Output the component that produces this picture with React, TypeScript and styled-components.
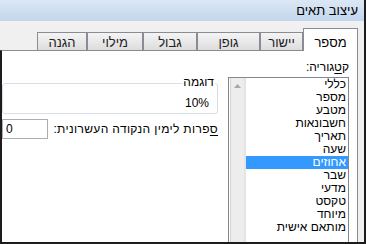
import React from "react";
import styled, { createGlobalStyle } from "styled-components";

const FONT = `"Liberation Sans", "DejaVu Sans", sans-serif`;

const Global = createGlobalStyle`
  html, body { margin: 0; padding: 0; background: #fff; }
  body { width: 366px; height: 244px; overflow: hidden; }
  *, *::before, *::after { box-sizing: border-box; }
`;

const Frame = styled.div`
  width: 366px;
  height: 244px;
  display: flex;
  flex-direction: column;
  direction: rtl;
  overflow: hidden;
  background: #f0f0f0;
  border-right: 2px solid #1c1c1c;
  border-bottom: 2px solid #1c1c1c;
  font-family: ${FONT};
  color: #000;
`;

const TitleBar = styled.div`
  flex: none;
  height: 21px;
  display: flex;
  align-items: center;
  padding-right: 6px;
  background: linear-gradient(#dbe7f4, #c3d6ed);
  font-size: 13px;
`;

const Body = styled.div`
  flex: 1;
  min-height: 0;
  display: flex;
  flex-direction: column;
  padding: 7px 6px 0 0;
`;

const TabStrip = styled.div`
  flex: none;
  height: 22px;
  display: flex;
  align-items: flex-end;
`;

const Tab = styled.div<{ $w: number; $active?: boolean }>`
  flex: none;
  width: ${(p) => p.$w}px;
  height: ${(p) => (p.$active ? 23 : 18)}px;
  margin-bottom: ${(p) => (p.$active ? -1 : 0)}px;
  position: relative;
  z-index: ${(p) => (p.$active ? 1 : 0)};
  border: 1px solid #898c95;
  border-bottom: none;
  background: ${(p) =>
    p.$active ? "#fff" : "linear-gradient(#f4f4f4, #e9e9e9 50%, #dcdcdc)"};
  display: flex;
  justify-content: center;
  padding-top: ${(p) => (p.$active ? 7 : 3)}px;
  font-size: 13px;
  line-height: 14px;
  color: ${(p) => (p.$active ? "#000" : "#222")};
`;

const Panel = styled.div`
  flex: 1;
  min-height: 0;
  display: flex;
  gap: 10px;
  padding: 9px 8px 0 0;
  overflow: hidden;
  background: #fff;
  border-top: 1px solid #898c95;
  border-right: 1px solid #898c95;
  border-left: 2px solid #1c1c1c;
`;

const RightCol = styled.div`
  flex: none;
  width: 121px;
  display: flex;
  flex-direction: column;
`;

const FieldLabel = styled.div<{ $spacing?: number }>`
  font-size: 12px;
  line-height: 14px;
  white-space: nowrap;
  letter-spacing: ${(p) => p.$spacing ?? 0}px;
  u { text-decoration: underline; text-underline-offset: 2px; }
`;

const ListBox = styled.div`
  flex: 1;
  margin-top: 3px;
  display: flex;
  border: 1px solid #828790;
  border-bottom: none;
`;

const Items = styled.div`
  flex: 1;
  display: flex;
  flex-direction: column;
`;

const Item = styled.div<{ $selected?: boolean }>`
  height: 13px;
  line-height: 13px;
  padding-right: 2px;
  font-size: 12px;
  white-space: nowrap;
  background: ${(p) => (p.$selected ? "#3399ff" : "transparent")};
  color: ${(p) => (p.$selected ? "#fff" : "#000")};
`;

const ScrollBar = styled.div`
  flex: none;
  width: 17px;
  display: flex;
  flex-direction: column;
  align-items: center;
  padding-top: 6px;
  background: linear-gradient(to right, #fdfdfd 0 1px, #d6d6d6 1px 2px, #ededed 2px 15px, #e4e4e4 15px);
`;

const LeftCol = styled.div`
  flex: 1;
  min-width: 0;
  display: flex;
  flex-direction: column;
  padding-top: 23px;
`;

const GroupBox = styled.div`
  position: relative;
  height: 31px;
  border: 1px solid #d5dfe5;
  border-radius: 3px;
  padding: 12px 8px 0 0;
  font-size: 12px;
  line-height: 14px;
`;

const Legend = styled.span`
  position: absolute;
  top: -9px;
  right: 2px;
  padding: 0 1px;
  background: #fff;
  font-size: 12px;
  line-height: 14px;
`;

const DecimalRow = styled.div`
  margin-top: 5px;
  display: flex;
  align-items: center;
  gap: 5px;
`;

const SpinField = styled.div`
  flex: 1;
  height: 20px;
  border: 1px solid #abadb3;
  direction: ltr;
  text-align: left;
  padding-left: 3px;
  font-size: 12px;
  line-height: 18px;
`;

const tabs: { label: string; w: number }[] = [
  { label: "מספר", w: 55 },
  { label: "יישור", w: 43 },
  { label: "גופן", w: 63 },
  { label: "גבול", w: 54 },
  { label: "מילוי", w: 56 },
  { label: "הגנה", w: 50 },
];

const categories = [
  "כללי",
  "מספר",
  "מטבע",
  "חשבונאות",
  "תאריך",
  "שעה",
  "אחוזים",
  "שבר",
  "מדעי",
  "טקסט",
  "מיוחד",
  "מותאם אישית",
];

export default function App() {
  return (
    <>
      <Global />
      <Frame>
        <TitleBar>עיצוב תאים</TitleBar>
        <Body>
          <TabStrip>
            {tabs.map((t, i) => (
              <Tab key={t.label} $w={t.w} $active={i === 0}>
                {t.label}
              </Tab>
            ))}
          </TabStrip>
          <Panel>
            <RightCol>
              <FieldLabel>
                ק<u>ט</u>גוריה:
              </FieldLabel>
              <ListBox>
                <Items>
                  {categories.map((c) => (
                    <Item key={c} $selected={c === "אחוזים"}>
                      {c}
                    </Item>
                  ))}
                </Items>
                <ScrollBar>
                  <svg width="7" height="4" viewBox="0 0 7 4">
                    <path d="M3.5 0 L7 4 L0 4 Z" fill="#a8a8a8" />
                  </svg>
                </ScrollBar>
              </ListBox>
            </RightCol>
            <LeftCol>
              <GroupBox>
                <Legend>דוגמה</Legend>
                10%
              </GroupBox>
              <DecimalRow>
                <FieldLabel $spacing={0.35}>
                  <u>ס</u>פרות לימין הנקודה העשרונית:
                </FieldLabel>
                <SpinField>0</SpinField>
              </DecimalRow>
            </LeftCol>
          </Panel>
        </Body>
      </Frame>
    </>
  );
}
